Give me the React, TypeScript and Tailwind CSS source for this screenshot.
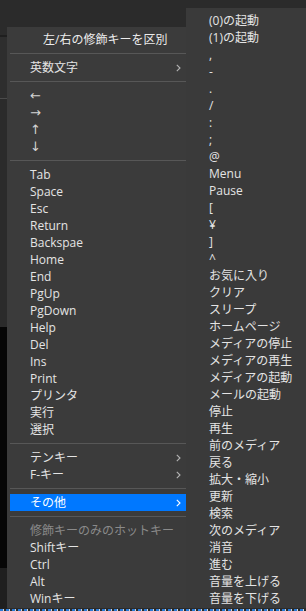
import React from "react";

const FONT = { fontFamily: '"Open Sans", "Noto Sans CJK JP", sans-serif' };

type Item =
  | { kind: "row"; label: string; sub?: boolean; disabled?: boolean; active?: boolean; arrow?: boolean }
  | { kind: "sep" };

const mainItems: Item[] = [
  { kind: "sep" },
  { kind: "row", label: "英数文字", sub: true },
  { kind: "sep" },
  { kind: "row", label: "\u2190\uFE0E", arrow: true },
  { kind: "row", label: "\u2192\uFE0E", arrow: true },
  { kind: "row", label: "\u2191\uFE0E", arrow: true },
  { kind: "row", label: "\u2193\uFE0E", arrow: true },
  { kind: "sep" },
  ...[
    "Tab",
    "Space",
    "Esc",
    "Return",
    "Backspae",
    "Home",
    "End",
    "PgUp",
    "PgDown",
    "Help",
    "Del",
    "Ins",
    "Print",
    "プリンタ",
    "実行",
    "選択",
  ].map((l) => ({ kind: "row", label: l }) as Item),
  { kind: "sep" },
  { kind: "row", label: "テンキー", sub: true },
  { kind: "row", label: "F-キー", sub: true },
  { kind: "sep" },
  { kind: "row", label: "その他", sub: true, active: true },
  { kind: "sep" },
  { kind: "row", label: "修飾キーのみのホットキー", disabled: true },
  { kind: "row", label: "Shiftキー" },
  { kind: "row", label: "Ctrl" },
  { kind: "row", label: "Alt" },
  { kind: "row", label: "Winキー" },
];

const subItems = [
  "(0)の起動",
  "(1)の起動",
  ",",
  "-",
  ".",
  "/",
  ":",
  ";",
  "@",
  "Menu",
  "Pause",
  "[",
  "¥",
  "]",
  "^",
  "お気に入り",
  "クリア",
  "スリープ",
  "ホームページ",
  "メディアの停止",
  "メディアの再生",
  "メディアの起動",
  "メールの起動",
  "停止",
  "再生",
  "前のメディア",
  "戻る",
  "拡大・縮小",
  "更新",
  "検索",
  "次のメディア",
  "消音",
  "進む",
  "音量を上げる",
  "音量を下げる",
];

function Chevron({ active }: { active?: boolean }) {
  return (
    <svg width="5" height="8" viewBox="0 0 5 8" className="shrink-0">
      <path
        d="M0.8 0.8 L4 4 L0.8 7.2"
        fill="none"
        stroke={active ? "#ffffff" : "#b4b4b4"}
        strokeWidth="1.1"
      />
    </svg>
  );
}

export default function App() {
  return (
    <div className="relative w-[306px] h-[611px] bg-[#2b2b2b] overflow-hidden" style={FONT}>
      <div className="flex h-[609px]">
        <div className="w-[7px] flex flex-col shrink-0">
          <div className="h-[35px] bg-[#2b2b2b]" />
          <div className="h-[2px] bg-[#1f1f1f]" />
          <div className="h-[61px] bg-[#2e2e2e]" />
          <div className="h-[1px] bg-[#4b4b4b]" />
          <div className="h-[228px] bg-[#2b2b2b]" />
          <div className="h-[241px] bg-[#060606]" />
          <div className="flex-1 bg-[#1f1f1f]" />
        </div>
        <div className="pt-[27px]">
          <div className="w-[192px] h-[581px] bg-[#3b3b3b] pt-[4px] flex flex-col text-[12px] leading-[17px] text-[#e4e4e4]">
            <div className="h-[17px] pl-[36px] text-[#ececec] whitespace-nowrap">左/右の修飾キーを区別</div>
            {mainItems.map((it, i) =>
              it.kind === "sep" ? (
                <div key={i} className="h-[11px] flex items-center px-[3px]">
                  <div className="h-px w-full bg-[#575757]" />
                </div>
              ) : (
                <div
                  key={i}
                  className={
                    "h-[17px] mx-[3px] pl-[20px] pr-[15px] flex items-center justify-between whitespace-nowrap " +
                    (it.active ? "bg-[#0078ff] text-white " : "") +
                    (it.disabled ? "text-[#8a8a8a]" : "")
                  }
                >
                  {it.arrow ? (
                    <span
                      className="text-[13px] leading-[17px] text-[#d4d4d4]"
                      style={{ fontFamily: '"DejaVu Sans", sans-serif' }}
                    >
                      {it.label}
                    </span>
                  ) : (
                    <span>{it.label}</span>
                  )}
                  {it.sub && <Chevron active={it.active} />}
                </div>
              )
            )}
          </div>
        </div>
      </div>
      <div className="h-[2px] bg-[repeating-linear-gradient(90deg,#2b7bd6_0px,#2b7bd6_3px,#d8d8d8_3px,#d8d8d8_4px,#2b2b2b_4px,#2b2b2b_6px)]" />

      <div className="absolute left-[186px] top-[8px] w-[120px] h-[600px] bg-[#3a3a3a] pt-[4px] flex flex-col text-[12px] leading-[17px] text-[#e4e4e4]">
        {subItems.map((l, i) => (
          <div key={i} className="h-[17px] pl-[23px] whitespace-nowrap">
            {l}
          </div>
        ))}
      </div>
    </div>
  );
}
